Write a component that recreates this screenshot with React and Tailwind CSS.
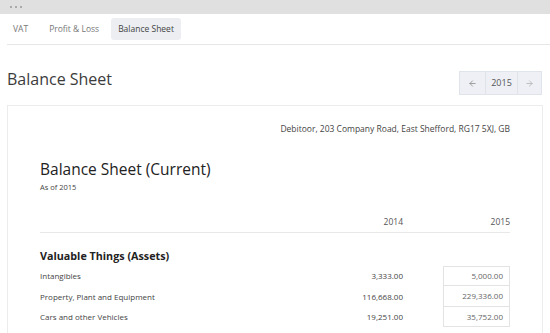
import { ArrowLeft, ArrowRight } from "lucide-react";

const rows = [
  { label: "Intangibles", prev: "3,333.00", curr: "5,000.00" },
  { label: "Property, Plant and Equipment", prev: "116,668.00", curr: "229,336.00" },
  { label: "Cars and other Vehicles", prev: "19,251.00", curr: "35,752.00" },
];

export default function App() {
  return (
    <div className="h-[333px] w-[550px] overflow-hidden bg-white text-[#333]" style={{ fontFamily: "'Open Sans', sans-serif" }}>
      {/* window chrome */}
      <div className="flex h-[14px] items-center gap-[3px] bg-[#e0e0e0] pl-[10px]">
        <span className="h-[2px] w-[2px] rounded-full bg-[#999]" />
        <span className="h-[2px] w-[2px] rounded-full bg-[#999]" />
        <span className="h-[2px] w-[2px] rounded-full bg-[#999]" />
      </div>

      {/* tabs */}
      <div className="ml-[7px] flex h-[31px] items-center border-b border-[#e6e6e6] text-[8.5px] text-[#777]">
        <span className="px-[6px] py-[5px]">VAT</span>
        <span className="ml-[9px] px-[6px] py-[5px]">Profit &amp; Loss</span>
        <span className="ml-[6px] rounded-[3px] bg-[#eceef2] px-[7px] py-[5px] text-[#444]">Balance Sheet</span>
      </div>

      {/* header */}
      <div className="flex items-center justify-between pl-[7px] pr-[8px] pt-[18px]">
        <h1 className="text-[16px] font-normal leading-[22px] text-[#3c3c3c]">Balance Sheet</h1>
        <div className="mt-[8px] flex h-[24px] border border-[#dfe3ea] bg-[#eef0f5] text-[9px] text-[#555]">
          <button className="flex w-[25px] items-center justify-center text-[#999]">
            <ArrowLeft size={9} strokeWidth={2.5} />
          </button>
          <span className="flex w-[33px] items-center justify-center border-x border-[#dfe3ea]">2015</span>
          <button className="flex w-[23px] items-center justify-center text-[#bbb]">
            <ArrowRight size={9} strokeWidth={2.5} />
          </button>
        </div>
      </div>

      {/* card */}
      <div className="mx-[7px] mt-[10px] border border-[#ececec] px-[32px] pb-4 pt-[17px]">
        <p className="text-right text-[8.5px] text-[#444]">Debitoor, 203 Company Road, East Shefford, RG17 5XJ, GB</p>

        <h2 className="mt-[22px] text-[15.5px] font-normal leading-[22px] text-[#222]">Balance Sheet (Current)</h2>
        <p className="mt-[2px] text-[7.5px] text-[#444]">As of 2015</p>

        <div className="mt-[23px] flex border-b border-[#e8e8e8] pb-[3px] text-[8.5px] text-[#555]">
          <span className="flex-1" />
          <span className="w-[80px] text-right">2014</span>
          <span className="w-[107px] text-right">2015</span>
        </div>

        <h3 className="mt-[15px] text-[10.75px] font-bold text-[#222]">Valuable Things (Assets)</h3>

        <div className="mt-[2px]">
          {rows.map((r, i) => (
            <div key={r.label} className="flex h-[20.5px] items-center text-[8px] text-[#444]">
              <span className="flex-1">{r.label}</span>
              <span className="w-[80px] text-right">{r.prev}</span>
              <span
                className={`ml-[40px] flex h-full w-[67px] items-center justify-end border-x border-b border-[#e3e3e3] pr-[6px] text-[#666] ${i === 0 ? "border-t" : ""}`}
              >
                {r.curr}
              </span>
            </div>
          ))}
        </div>
      </div>
    </div>
  );
}
